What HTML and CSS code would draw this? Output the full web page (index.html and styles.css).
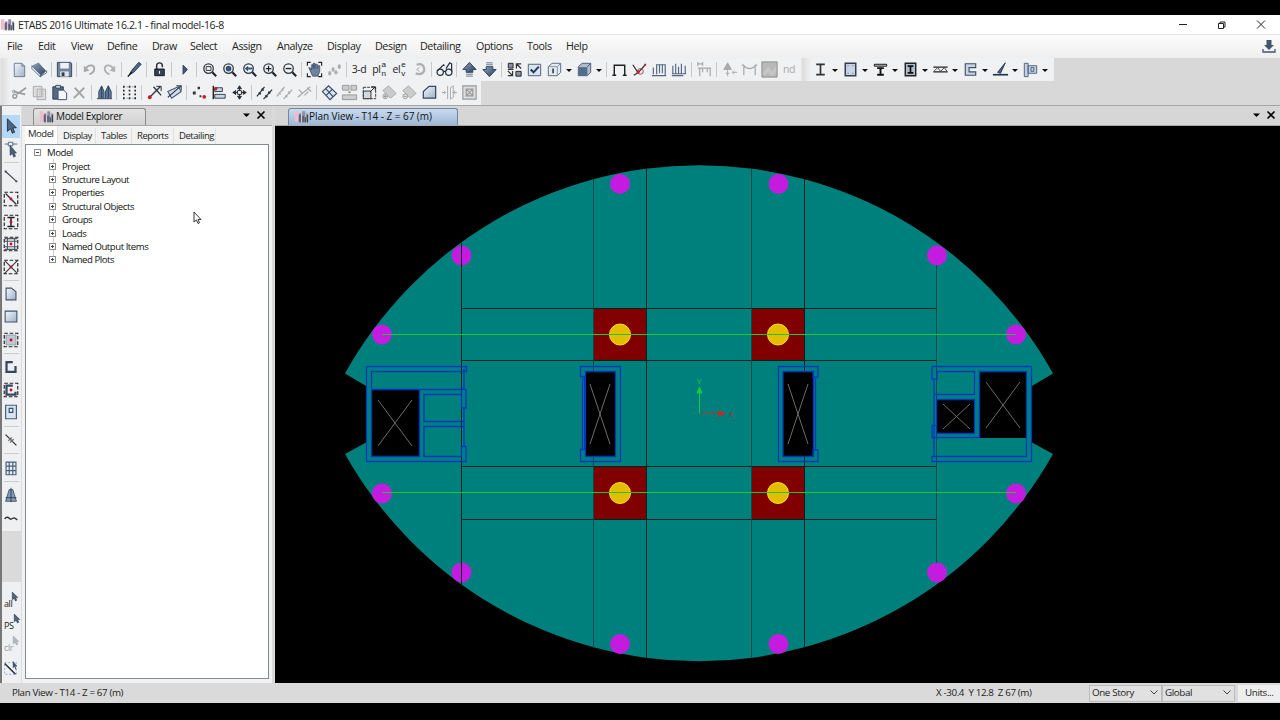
FILE: index.html
```html
<!DOCTYPE html>
<html lang="en">

<head>
    <meta charset="UTF-8">
    <meta name="viewport" content="width=device-width, initial-scale=1.0">
    <title>ETABS 2016 Ultimate 16.2.1 - final model-16-8</title>
    <link rel="stylesheet" href="styles.css">
</head>

<body>
    <!-- Icon shapes, all on a 20x20 grid -->
    <svg class="hidden">
        <defs>
            <linearGradient id="steel" x1="0" y1="0" x2="1" y2="1"><stop offset="0" stop-color="#f4f8fc"/><stop offset="1" stop-color="#9fb0c5"/></linearGradient>
            <linearGradient id="navy" x1="0" y1="0" x2="1" y2="1"><stop offset="0" stop-color="#8fa5be"/><stop offset="1" stop-color="#293b54"/></linearGradient>
        </defs>
        <symbol id="app" viewBox="0 0 20 20"><path d="M1 17V3h5v14zM8 17V6h3v11z" fill="#eebccb"/><path d="M6 17V8h3v9zM11 17V3h4v14zM16 17V6h3v11z" fill="#8b90a0"/><path d="M8 18V6M12 18V9M15 18v-7M18 18V8" stroke="#39425a" stroke-width="1.500"/></symbol>
        <symbol id="new" viewBox="0 0 20 20"><path d="M4.500 3.500h8l3 3v11h-11z" fill="url(#steel)" stroke="#6b7b91"/><path d="M12.500 3.500v3h3" fill="none" stroke="#6b7b91"/></symbol>
        <symbol id="open" viewBox="0 0 20 20"><path d="M2 6l7-3.500L17.500 12 11 17.500z" fill="url(#navy)"/><path d="M2 6v3l9 9v-2.500zM11 17.500l6.500-4V11" fill="#e4ebf3" stroke="#435873" stroke-width=".8"/></symbol>
        <symbol id="save" viewBox="0 0 20 20"><path d="M2.500 2.500h14l1 1v14h-15z" fill="#71849c" stroke="#33465e"/><path d="M5.500 3h9v6h-9z" fill="#eef2f6"/><path d="M5.500 12h9v5.500h-9z" fill="#dce3eb"/><path d="M7 13h3v4H7z" fill="#2c3c51"/></symbol>
        <symbol id="undo" viewBox="0 0 20 20"><path d="M6 9c3-5 9-4 9 0 0 3-2 5-5 6" fill="none" stroke="#a9a9a9" stroke-width="2"/><path d="M4 6l0 7 6-2z" fill="#a9a9a9"/></symbol>
        <symbol id="redo" viewBox="0 0 20 20"><path d="M14 9C11 4 5 5 5 9c0 3 2 5 5 6" fill="none" stroke="#b2b2b2" stroke-width="2"/><path d="M16 6v7l-6-2z" fill="#b2b2b2"/></symbol>
        <symbol id="pen" viewBox="0 0 20 20"><path d="M5 15L7 11l7.500-8.500 2.500 2L9 13z" fill="#526a89" stroke="#1c2839"/><path d="M3 17.500L7 13" stroke="#111" stroke-width="1.500"/></symbol>
        <symbol id="lock" viewBox="0 0 20 20"><path d="M7 10V6c0-4 6-4 6 0v1.500" fill="none" stroke="#222c38" stroke-width="1.500"/><path d="M5 9.500h10v7H5z" fill="#344457" stroke="#111"/><path d="M10 11.500v3" stroke="#fff"/></symbol>
        <symbol id="run" viewBox="0 0 20 20"><path d="M8.500 5.500l4.500 4.500-4.500 5z" fill="#41597a" stroke="#2a3b53"/></symbol>
        <symbol id="zoom" viewBox="0 0 20 20"><circle cx="9" cy="9" r="5" fill="#eef3f8" stroke="#353c46" stroke-width="1.400"/><path d="M13 13l4 4" stroke="#20262f" stroke-width="2.300"/></symbol>
        <symbol id="zbox" viewBox="0 0 20 20"><use href="#zoom"/><path d="M6.500 7h5v4h-5z" fill="none" stroke="#333"/></symbol>
        <symbol id="zfull" viewBox="0 0 20 20"><use href="#zoom"/><circle cx="9" cy="9" r="3" fill="#385475"/></symbol>
        <symbol id="zprev" viewBox="0 0 20 20"><use href="#zoom"/><path d="M5 9l3.500-3v2H13v2H8.500v2z" fill="#35567e"/></symbol>
        <symbol id="zin" viewBox="0 0 20 20"><use href="#zoom"/><path d="M6 9h6M9 6v6" stroke="#222" stroke-width="1.300"/></symbol>
        <symbol id="zout" viewBox="0 0 20 20"><use href="#zoom"/><path d="M6 9h6" stroke="#222" stroke-width="1.500"/></symbol>
        <symbol id="pan" viewBox="0 0 20 20"><path d="M2.500 6V2.500H6M14 2.500h3.500V6M2.500 14v3.500H6M17.500 14v3.500H14" fill="none" stroke="#222" stroke-width="1.200"/><path d="M4 8l2 .5 1 2V5h1.700v4V3.500h1.800V9l.5-4.500H13V9l1-3h1.500v6l-2 5H8z" fill="#71849b" stroke="#364c68" stroke-width=".8"/></symbol>
        <symbol id="feet" viewBox="0 0 20 20"><g fill="#aeaeae"><ellipse cx="5" cy="14" rx="1.700" ry="2.500"/><ellipse cx="8.500" cy="10" rx="1.700" ry="2.300"/><ellipse cx="11.500" cy="13" rx="1.700" ry="2.300"/><ellipse cx="15" cy="7" rx="1.700" ry="2.500"/></g></symbol>
        <symbol id="rotate" viewBox="0 0 20 20"><path d="M7 5c5-2 8 1 8 5s-5 6-9 4" fill="none" stroke="#b0b0b0" stroke-width="2.500"/><path d="M10 8l-3 2 3 2" fill="none" stroke="#aaa"/></symbol>
        <symbol id="glasses" viewBox="0 0 20 20"><g fill="#eef3f8" stroke="#26303d" stroke-width="1.300"><circle cx="5.500" cy="13" r="3.300"/><circle cx="14.500" cy="13" r="3.300"/><path d="M9 12h2M3 11l6-6 1 1M17.500 12V4l-2-1-4 6" fill="none"/></g></symbol>
        <symbol id="up" viewBox="0 0 20 20"><path d="M10 2.500L17 10h-3.500v3h-7v-3H3z" fill="url(#navy)" stroke="#2e445f"/><path d="M6.500 15h7M6.500 17h7" stroke="#61758d"/></symbol>
        <symbol id="down" viewBox="0 0 20 20"><path d="M10 17.500L17 10h-3.500V7h-7v3H3z" fill="url(#navy)" stroke="#2e445f"/><path d="M6.500 5h7M6.500 3h7" stroke="#61758d"/></symbol>
        <symbol id="shrink" viewBox="0 0 20 20"><path d="M3.500 3.500h5v5h-5zM11.500 12h5.500v5h-5.500z" fill="#8592a3" stroke="#222"/><path d="M17 4h-5v5M12 4l5 5M3 11.500l5 5M8 11.500v5H3M3 10h6" fill="none" stroke="#333" stroke-width="1.300"/></symbol>
        <symbol id="check" viewBox="0 0 20 20"><path d="M3.500 4.500h13v12h-13z" fill="#dbe5ef" stroke="#4d6078"/><path d="M6 10l3 3 5.500-6" fill="none" stroke="#263c5a" stroke-width="2.200"/></symbol>
        <symbol id="cube" viewBox="0 0 20 20"><path d="M3.500 7l4-3.500h9V13L13 16.500H3.500z" fill="#e4eaf0" stroke="#596b81"/><path d="M3.500 7H13v9.500M13 7l3.500-3.500" fill="none" stroke="#8090a5"/><path d="M8.500 9v5" stroke="#222" stroke-width="1.500"/></symbol>
        <symbol id="solid" viewBox="0 0 20 20"><path d="M3.500 7l4-3.500h9V13L13 16.500H3.500z" fill="#aebccd" stroke="#4b5f79"/><path d="M4 7.500h9v9H4z" fill="#536d8c"/><path d="M13 7l3.500-3.500" stroke="#43556b"/></symbol>
        <symbol id="frame" viewBox="0 0 20 20"><path d="M4.500 16V5.500h11V16M2.500 16h4M13.500 16h4" fill="none" stroke="#222" stroke-width="1.500"/></symbol>
        <symbol id="joint" viewBox="0 0 20 20"><path d="M3 5l6 9M4 16l5-3 7-8" fill="none" stroke="#333" stroke-width="1.300"/><circle cx="11" cy="12" r="3" fill="none" stroke="#a93b4a"/><path d="M15 4h2v2h-2zM7 11h3v3H7z" fill="#c32136"/></symbol>
        <symbol id="load" viewBox="0 0 20 20"><path d="M3.500 15V8M7 15V5h9v11M10 5v9M13 5v9M2 16.500h15" fill="none" stroke="#52667f" stroke-width="1.200"/></symbol>
        <symbol id="load2" viewBox="0 0 20 20"><path d="M3 15V6M6 15V4M9 14V7M12 14V4M16 14V6M2 14.500h15M2 16.500h12" fill="none" stroke="#52667f" stroke-width="1.200"/></symbol>
        <symbol id="beam" viewBox="0 0 20 20"><path d="M3 2v4M8 2v4M3 4h5M5 17V8.500h11V17M3 8.500h14M8 8.500V13M13 8.500V13" fill="none" stroke="#aaa" stroke-width="1.300"/></symbol>
        <symbol id="tree" viewBox="0 0 20 20"><path d="M8 3l-4 7h8zM8 10v7M6 14h4M18 13h-5M13 13l2-2M13 13l2 2" fill="#aaa" stroke="#aaa"/></symbol>
        <symbol id="bend" viewBox="0 0 20 20"><path d="M4 16V6c3 4 9 4 12 0v10M2 5l4 3M18 5l-4 3" fill="none" stroke="#aaa" stroke-width="1.300"/></symbol>
        <symbol id="map" viewBox="0 0 20 20"><path d="M2 2h16v16H2z" fill="#b9b9b9" stroke="#8c8c8c"/><path d="M3 13l6-6 4 5 4-6v6l-4 5-4-4-4 3z" fill="#c6c6c6"/></symbol>
        <symbol id="isec" viewBox="0 0 20 20"><path d="M5.500 4.500h9M5.500 15.500h9M10 4v12" stroke="#333" stroke-width="1.800"/></symbol>
        <symbol id="col" viewBox="0 0 20 20"><path d="M4.500 3.500h11v13h-11z" fill="#c8d4e1" stroke="#333f4f" stroke-width="1.600"/><path d="M7 6h1M12 6h1M7 14h1M12 14h1" stroke="#506780"/></symbol>
        <symbol id="tsec" viewBox="0 0 20 20"><path d="M3.500 4.500h13v2h-13z" fill="#ccc" stroke="#111"/><path d="M6.500 8.500h7M6.500 15.500h7M10 8v8" stroke="#111" stroke-width="2"/></symbol>
        <symbol id="ibox" viewBox="0 0 20 20"><path d="M4.500 3.500h11v13h-11z" fill="#aebccb" stroke="#222" stroke-width="1.500"/><path d="M7 6.500h6M7 13.500h6M10 7v6" stroke="#111" stroke-width="1.800"/></symbol>
        <symbol id="truss" viewBox="0 0 20 20"><path d="M2.500 7.500h15M2.500 12.500h15" stroke="#222" stroke-width="1.500"/><path d="M3 12l4-4 3 4 4-4 3 4" fill="none" stroke="#444"/></symbol>
        <symbol id="wall" viewBox="0 0 20 20"><path d="M4.500 4h11v4H8.500v4.500h7v3.500h-11z" fill="#c7d4e1" stroke="#405069" stroke-width="1.200"/></symbol>
        <symbol id="edit" viewBox="0 0 20 20"><path d="M7 13l8-10-5 11z" fill="#506683" stroke="#22354d"/><path d="M2 15.500h16" stroke="#25394f" stroke-width="1.800"/></symbol>
        <symbol id="conn" viewBox="0 0 20 20"><path d="M3.500 3.500h4v14h-4zM7.500 6h9v8h-9z" fill="#c2d0df" stroke="#4d6482"/><path d="M10.500 8h3v4h-3z" fill="none" stroke="#4d6482"/></symbol>
        <symbol id="cut" viewBox="0 0 20 20"><path d="M17 5L7 12M4 9l12 3" stroke="#999" stroke-width="1.700"/><circle cx="5" cy="14" r="2" fill="none" stroke="#999" stroke-width="1.500"/><circle cx="4" cy="9" r="1.500" fill="none" stroke="#999"/></symbol>
        <symbol id="copy" viewBox="0 0 20 20"><path d="M3.500 3.500h9v11h-9zM7.500 6.500h9v11h-9z" fill="#dedede" stroke="#aaa"/><path d="M9.500 9h5M9.500 11.500h5M9.500 14h5" stroke="#bbb"/></symbol>
        <symbol id="paste" viewBox="0 0 20 20"><path d="M3 4h11v13H3z" fill="#536a87" stroke="#273a51"/><path d="M6 2.500h5v3H6z" fill="#ccd5de" stroke="#3a485a"/><path d="M8.500 7.500h6l3 3v7h-9z" fill="#f3f6fa" stroke="#3f5067"/></symbol>
        <symbol id="del" viewBox="0 0 20 20"><path d="M5 5l10 11M15 5L4 16" stroke="#a5a5a5" stroke-width="2"/></symbol>
        <symbol id="towers" viewBox="0 0 20 20"><path d="M4 16V9l3-6 2.500 6v7M11 16V9l3-6 3 6v7" fill="#5f7b99" stroke="#2c435e"/><path d="M2 16.500h16M7 4v12M14 3v13" stroke="#263c54"/></symbol>
        <symbol id="grid" viewBox="0 0 20 20"><path d="M4 3v14M10 3v14M16 3v14" stroke="#222" stroke-width="1.700" stroke-dasharray="2 2"/><path d="M4 4h12M4 16h12" stroke="#666" stroke-dasharray="1 2"/></symbol>
        <symbol id="mpoint" viewBox="0 0 20 20"><path d="M6 14L16 4M9 4l8 9" stroke="#2a3440" stroke-width="1.400"/><path d="M12 3.500h5v5" fill="none" stroke="#222"/><circle cx="5" cy="15" r="2" fill="#c4172c"/></symbol>
        <symbol id="mline" viewBox="0 0 20 20"><path d="M3 9l11-5 3 5-10 7z" fill="#d7e0e9" stroke="#455c76" stroke-width="1.200"/><path d="M3 15L17 3M12 3h5v5" fill="none" stroke="#253950" stroke-width="1.100"/></symbol>
        <symbol id="points" viewBox="0 0 20 20"><path d="M8 4h2.500v2.500H8zM3 9h3v3H3zM10 13h2v2h-2z" fill="#333"/><circle cx="15" cy="14.500" r="2" fill="#c61e31"/></symbol>
        <symbol id="align" viewBox="0 0 20 20"><path d="M3.500 3v14" stroke="#222" stroke-width="1.500"/><path d="M5 5h8v4H5zM5 12h11v4H5z" fill="#ccd7e3" stroke="#303c4b"/><circle cx="6" cy="6" r="1.800" fill="#c61e31"/></symbol>
        <symbol id="move" viewBox="0 0 20 20"><path d="M3 10h14M10 3v14M3 10l3-2v4zM17 10l-3-2v4zM10 3L8 6h4zM10 17l-2-3h4z" fill="#222d3b" stroke="#222d3b"/><path d="M8 8h4v4H8z" fill="#fff" stroke="#222"/></symbol>
        <symbol id="lines" viewBox="0 0 20 20"><path d="M2 14l8-10M9 17l9-10" stroke="#29333e" stroke-width="1.300"/><path d="M4 10l2 2M7 6l2 2M11 13l2 2M14 9l2 2" stroke="#29333e" stroke-width="1.800"/></symbol>
        <symbol id="linesg" viewBox="0 0 20 20"><path d="M2 14l8-10M9 17l9-10M4 10l2 2M7 6l2 2M11 13l2 2M14 9l2 2" stroke="#aaa" stroke-width="1.300"/></symbol>
        <symbol id="breakg" viewBox="0 0 20 20"><path d="M3 15L16 4M4 7l4 4M10 13l4-4M13 5l4 4" stroke="#aaa" stroke-width="1.300"/></symbol>
        <symbol id="mesh" viewBox="0 0 20 20"><path d="M2.500 9L9 3l8.500 8-7 6.500zM6 6l8 8.500M13 6.500l-7 7" fill="#dae4ed" stroke="#334a65" stroke-width="1.200"/></symbol>
        <symbol id="merge" viewBox="0 0 20 20"><path d="M2.500 2.500h7v5h-7zM11.500 2.500h6v5h-6zM2.500 12.500h15v5h-15z" fill="#ccc" stroke="#999"/><path d="M8 9h4l-2 2z" fill="#888"/></symbol>
        <symbol id="expand" viewBox="0 0 20 20"><path d="M3.500 4.500h13v12h-13z" fill="none" stroke="#333" stroke-dasharray="3 1"/><path d="M3.500 8.500h8v8h-8z" fill="#d0dae5" stroke="#333"/><path d="M11 9l5-5M12 4h4v4" stroke="#222" fill="none"/></symbol>
        <symbol id="sladd" viewBox="0 0 20 20"><path d="M3 8l6-5 8 8-6 5-3-3z" fill="#ccc" stroke="#aaa"/><circle cx="5.500" cy="14" r="2.500" fill="#eee" stroke="#999"/><path d="M4 14h3M5.500 12.500v3" stroke="#888"/></symbol>
        <symbol id="slsub" viewBox="0 0 20 20"><path d="M3 8l6-5 8 8-6 5-3-3z" fill="#ccc" stroke="#aaa"/><circle cx="5.500" cy="14" r="2.500" fill="#eee" stroke="#999"/><path d="M4 14h3" stroke="#888"/></symbol>
        <symbol id="poly" viewBox="0 0 20 20"><path d="M3.500 16V9l6-5.500h7V16z" fill="url(#steel)" stroke="#35475e" stroke-width="1.300"/></symbol>
        <symbol id="split" viewBox="0 0 20 20"><path d="M8 3v14M11 5l3-2v12l-3 2zM2 10h4M14 10h4M4 8l2 2-2 2M16 8l-2 2 2 2" fill="none" stroke="#aaa"/></symbol>
        <symbol id="opening" viewBox="0 0 20 20"><path d="M3 3h14v14H3zM6.500 6.500h7v7h-7zM6.500 6.500l7 7M13.500 6.500l-7 7" fill="#ddd" stroke="#999" stroke-width="1.200"/></symbol>
        <symbol id="pointer" viewBox="0 0 20 20"><path d="M6 2v14l3.500-3 2 5 2.500-1-2-5h4z" fill="#50657e" stroke="#203047"/></symbol>
        <symbol id="reshape" viewBox="0 0 20 20"><path d="M3 4.500h14" stroke="#46627f"/><path d="M7 2.500h5v4H7z" fill="#eaf2fa" stroke="#46627f"/><path d="M9 6v11l2.500-2 1.500 4 2-1-1.500-3.500H16z" fill="#4a6079" stroke="#27394f" stroke-width=".7"/></symbol>
        <symbol id="line" viewBox="0 0 20 20"><path d="M4 5l12 11" stroke="#3c4652" stroke-width="1.200"/><path d="M3 4h2v2H3zM15 15h2v2h-2z" fill="#3c4652"/></symbol>
        <symbol id="sel" viewBox="0 0 20 20"><path d="M2.500 2.500h15v15h-15z" fill="none" stroke="#222" stroke-width="1.300" stroke-dasharray="4 2"/></symbol>
        <symbol id="dot" viewBox="0 0 20 20"><circle cx="10" cy="10" r="1.600" fill="#c00f2c"/></symbol>
        <symbol id="qline" viewBox="0 0 20 20"><use href="#sel"/><path d="M4 4l12 12" stroke="#333" stroke-width="1.500"/><use href="#dot"/></symbol>
        <symbol id="qcol" viewBox="0 0 20 20"><use href="#sel"/><path d="M6 5h8M6 15h8M10 5v10" stroke="#222" stroke-width="1.600"/><use href="#dot"/></symbol>
        <symbol id="qsec" viewBox="0 0 20 20"><use href="#sel"/><path d="M3 4h14M3 7h14M3 13h14M3 16h14M6 3v14M14 3v14" stroke="#4c5763" stroke-width="1.200"/><use href="#dot"/></symbol>
        <symbol id="qbrace" viewBox="0 0 20 20"><use href="#sel"/><path d="M3 3l14 14M17 3L3 17" stroke="#333" stroke-width="1.200"/><use href="#dot"/></symbol>
        <symbol id="area" viewBox="0 0 20 20"><path d="M4.500 3.500h6l5 4v9h-11z" fill="url(#steel)" stroke="#41536b" stroke-width="1.200"/></symbol>
        <symbol id="rect" viewBox="0 0 20 20"><path d="M3.500 3.500h13v12h-13z" fill="url(#steel)" stroke="#41536b" stroke-width="1.200"/></symbol>
        <symbol id="qarea" viewBox="0 0 20 20"><path d="M4.500 4.500h11v11h-11z" fill="#c1c8d2" stroke="#8d98a5"/><use href="#sel"/><use href="#dot"/></symbol>
        <symbol id="dwall" viewBox="0 0 20 20"><path d="M12 4.500H5v11h10V9" fill="none" stroke="#35485f" stroke-width="2.500"/></symbol>
        <symbol id="qwall" viewBox="0 0 20 20"><use href="#sel"/><path d="M12 5H5v10h10v-3" fill="none" stroke="#35485f" stroke-width="2.500"/><use href="#dot"/></symbol>
        <symbol id="wopen" viewBox="0 0 20 20"><path d="M4 2.500h12v15H4z" fill="#dae4ed" stroke="#465f7c" stroke-width="1.300"/><path d="M8 6h4v4.500H8z" fill="#fff" stroke="#304b6a" stroke-width="1.300"/></symbol>
        <symbol id="link" viewBox="0 0 20 20"><path d="M4 4l12 12" stroke="#333" stroke-width="1.400"/><path d="M7 11l4-4M9 13l4-4M8 8l4 4" stroke="#666" stroke-width="1.300"/></symbol>
        <symbol id="sgrid" viewBox="0 0 20 20"><path d="M4.500 3.500h11v14h-11zM8 3.500v14M12 3.500v14M4.500 8h11M4.500 13h11" fill="#e7edf3" stroke="#49607b" stroke-width="1.300"/></symbol>
        <symbol id="tower" viewBox="0 0 20 20"><path d="M4 17L8 4h4l4 13z" fill="#869bb3" stroke="#42586f"/><path d="M10 2v16M4 13h12" stroke="#263c54"/></symbol>
        <symbol id="wave" viewBox="0 0 20 20"><path d="M3 11c2-3 4-2 6 0 2 1.500 3-2 5-1l3 2" fill="none" stroke="#333" stroke-width="1.600"/></symbol>
        <symbol id="qclear" viewBox="0 0 20 20"><path d="M3 4h13v13H3z" fill="none" stroke="#89a5c1" stroke-dasharray="2 2"/><path d="M3 5l12 12" stroke="#1f2b39" stroke-width="1.600"/><path d="M12 2v8l2-1 1 3 1-1-1-3h2z" fill="#415872"/></symbol>
    </svg>

    <div class="window">
        <div class="titlebar">
            <svg class="app-icon"><use href="#app"/></svg>
            <span class="title">ETABS 2016 Ultimate 16.2.1 - final model-16-8</span>
            <svg class="controls" viewBox="0 0 100 20"><g fill="none" stroke="#222"><path d="M9 9.500h8"/><path d="M48.500 8.500h5v5h-5zM50 8.500V7h5v5h-1.500"/><path d="M87 5.500l8 8M95 5.500l-8 8"/></g></svg>
        </div>

        <div class="menubar">
            <span style="width: 31px">File</span><span style="width: 33px">Edit</span><span style="width: 36px">View</span><span style="width: 45px">Define</span><span style="width: 38px">Draw</span><span style="width: 42px">Select</span><span style="width: 45px">Assign</span><span style="width: 50px">Analyze</span><span style="width: 48px">Display</span><span style="width: 45px">Design</span><span style="width: 56px">Detailing</span><span style="width: 51px">Options</span><span style="width: 39px">Tools</span><span>Help</span>
            <svg class="download" viewBox="0 0 16 16"><path d="M5.500 2h5v5H13l-5 5-5-5h2.500z" fill="#42566b"/><path d="M2 11v3h12v-3" fill="none" stroke="#42566b" stroke-width="1.300"/></svg>
        </div>

        <div class="toolrow">
            <div class="toolbar" id="bar-main"></div>
            <div class="toolbar sections" id="bar-sections"></div>
        </div>
        <div class="toolrow">
            <div class="toolbar" id="bar-edit"></div>
        </div>

        <div class="workspace">
            <div class="sidebar">
                <div id="bar-draw"></div>
                <div class="filler"></div>
                <div class="snap">
                    <div><span>all</span><svg><use href="#pointer"/></svg></div>
                    <div><span>PS</span><svg><use href="#pointer"/></svg></div>
                    <div class="off"><span>clr</span><svg><use href="#pointer"/></svg></div>
                </div>
                <div class="tool"><svg class="icon"><use href="#qclear"/></svg></div>
            </div>

            <div class="explorer">
                <div class="panel-head">
                    <div class="tab"><svg class="app-icon"><use href="#app"/></svg>Model Explorer</div>
                    <svg class="panel-btns" viewBox="0 0 26 12"><path d="M1 4.500h7L4.500 8z"/><path d="M15.500 2.500l7 7M22.500 2.500l-7 7" stroke="#000" stroke-width="1.600"/></svg>
                </div>
                <div class="subtabs">
                    <span class="active" style="width: 28px">Model</span><span style="width: 32px">Display</span><span style="width: 30px">Tables</span><span style="width: 36px">Reports</span><span style="width: 36px">Detailing</span>
                </div>
                <div class="tree">
                    <div class="node root"><i class="box minus"></i>Model</div>
                    <div class="children">
                        <div class="node"><i class="box"></i>Project</div>
                        <div class="node"><i class="box"></i>Structure Layout</div>
                        <div class="node"><i class="box"></i>Properties</div>
                        <div class="node"><i class="box"></i>Structural Objects</div>
                        <div class="node"><i class="box"></i>Groups</div>
                        <div class="node"><i class="box"></i>Loads</div>
                        <div class="node"><i class="box"></i>Named Output Items</div>
                        <div class="node"><i class="box"></i>Named Plots</div>
                    </div>
                    <svg class="cursor" viewBox="0 0 10 14"><path d="M1 1v10l2.500-2 1.500 3.500 1.500-.7L5 8.500h3z" fill="#fff" stroke="#222" stroke-width=".9"/></svg>
                </div>
            </div>

            <div class="view">
                <div class="panel-head">
                    <div class="tab blue"><svg class="app-icon"><use href="#app"/></svg>Plan View - T14 - Z = 67 (m)</div>
                    <svg class="panel-btns" viewBox="0 0 26 12"><path d="M1 4.500h7L4.500 8z"/><path d="M15.500 2.500l7 7M22.500 2.500l-7 7" stroke="#000" stroke-width="1.600"/></svg>
                </div>
                <svg class="plan" viewBox="275 126 1005 557">
                    <!-- slab -->
                    <path fill="#00807d" d="M345 373.500A405 405 0 0 1 1053 373.500L1032 386V442.500L1053 454A406 406 0 0 1 345 454L366 442.500V386z"/>
                    <!-- column drops -->
                    <path fill="#800000" d="M593 308h54v53h-54zM752 308h53v53h-53zM593 466h54v54h-54zM752 466h53v54h-53z"/>
                    <g fill="#c41be0"><circle cx="620" cy="184" r="10"/><circle cx="778.500" cy="184" r="10"/><circle cx="461.500" cy="255.500" r="10"/><circle cx="937" cy="255.500" r="10"/><circle cx="382" cy="334.500" r="10"/><circle cx="1016" cy="334.500" r="10"/><circle cx="382" cy="493.500" r="10"/><circle cx="1016" cy="493.500" r="10"/><circle cx="461.500" cy="572.500" r="10"/><circle cx="937" cy="572.500" r="10"/><circle cx="620" cy="644" r="10"/><circle cx="778.500" cy="644" r="10"/></g>
                    <g fill="#e3bd00" stroke="#ffe11b"><circle cx="620" cy="334.500" r="10.500"/><circle cx="778" cy="334.500" r="10.500"/><circle cx="620" cy="493" r="10.500"/><circle cx="778" cy="493" r="10.500"/></g>
                    <!-- slab edges -->
                    <path fill="none" stroke="#06221f" d="M461.500 243v342M646.500 169v489M804.500 179v469M461 308.500h476M461 360.500h476M461 466.500h476M461 519.500h476"/>
                    <path fill="none" stroke="#0a4c49" d="M593.500 179v469M751.500 169v489M936.500 265v298"/>
                    <path stroke="#1dc82a" stroke-width="1.200" d="M382 334.500h634M382 492.500h634"/>
                    <!-- shaft openings -->
                    <path d="M371 390h49v66h-49zM585 371h31v86h-31zM783 371h31v86h-31zM936 399h39v35h-39zM979 371h48v67h-48z"/>
                    <!-- core walls -->
                    <g fill="none" stroke="#0038c4" stroke-width="1.300">
                        <path d="M366.500 366.500h100v5H371.500V456.500h48V389.500M366.500 366.500v95h99.500v-15h-4.500v10h-37.500V426.500h39.500M371.500 389.500h94.500v18.500h-5M464 369v20M464 408v38M461.500 390v18.500M461.500 394.500h-37.500v27h39.500"/>
                        <path d="M580.500 366.500h40v95h-40v-12h4v-73h-4zM585.500 371.500h30v85h-30zM582.500 377v73"/>
                        <path d="M778.500 366.500h39.500V377h-5V371.500h-30v85h30v-6.500h5v11.500h-39.500zM815.500 377v73M813.500 371.500v85"/>
                        <path d="M932 366.500h99.500v95h-99.500v-5h94.500v-85h-47v66h-47.500v-12h4.500M932 366.500v12.500h5v-7.500h37.500v23H935M934 379v78M936.500 399.500h38v34h-38z"/>
                    </g>
                    <path fill="none" stroke="#777" stroke-width=".9" d="M378 400l34 46M412 400l-34 46M590 384l20 60M610 384l-20 60M788 384l20 60M808 384l-20 60M943 404l27 25M970 404l-27 25M986 382l34 46M1020 382l-34 46"/>
                    <!-- axes -->
                    <path d="M699.500 413.500V392M697 393l2.500-6 2.500 6z" fill="#19c83a" stroke="#19c83a"/>
                    <path d="M701 413.500h19M719 411l6 2.500-6 2.500z" fill="#b8302a" stroke="#b8302a" stroke-width="1.200"/>
                    <text x="696.500" y="384" class="axis y">Y</text>
                    <text x="728.500" y="416.500" class="axis x">X</text>
                </svg>
            </div>
        </div>

        <div class="statusbar">
            <span class="where">Plan View - T14 - Z = 67 (m)</span>
            <span class="coords">X -30.4&nbsp; Y 12.8&nbsp; Z 67 (m)</span>
            <span class="combo">One Story<svg viewBox="0 0 8 5"><path d="M.5.5L4 4 7.500.5" fill="none" stroke="#444"/></svg></span>
            <span class="combo">Global<svg viewBox="0 0 8 5"><path d="M.5.5L4 4 7.500.5" fill="none" stroke="#444"/></svg></span>
            <span class="units">Units...</span>
        </div>
    </div>

    <script src="script.js"></script>
</body>

</html>
```
FILE: styles.css
```css
body {
    margin: 0;
    background: #000;
    font-family: "Open Sans", "Noto Sans", sans-serif;
    color: #222;
}

.hidden {
    position: absolute;
    width: 0;
    height: 0;
}

.window {
    display: flex;
    flex-direction: column;
    width: 1280px;
    height: 688px;
    margin-top: 15px;
    background: #d8d8d8;
    overflow: hidden;
}

svg {
    display: block;
    flex: none;
}

.titlebar {
    display: flex;
    align-items: center;
    height: 19px;
    background: #fff;
    font-size: 10.500px;
    letter-spacing: -0.38px;
}

.app-icon {
    width: 15px;
    height: 15px;
}

.title {
    margin-left: 3px;
    white-space: nowrap;
}

.controls {
    width: 100px;
    height: 20px;
    margin-left: auto;
    margin-right: 10px;
}

/* Menu */
.menubar {
    display: flex;
    align-items: center;
    height: 24px;
    box-sizing: border-box;
    padding-left: 7px;
    padding-bottom: 2px;
    border-top: 1px solid #e4e4e4;
    background: linear-gradient(#fbfbfb, #efeff0);
    font-size: 10.700px;
}

.menubar span {
    letter-spacing: -0.38px;
    white-space: nowrap;
}

.download {
    width: 16px;
    height: 16px;
    margin-left: auto;
    margin-right: 3px;
}

/* Toolbars */
.toolrow {
    display: flex;
    height: 23px;
}

.toolrow + .toolrow {
    height: 24px;
}

.toolbar {
    display: flex;
    align-items: center;
    padding-left: 8px;
    padding-right: 2px;
    padding-bottom: 1px;
    background: linear-gradient(90deg, #dcdcdc, #f0f1f2 9px);
    border-left: 1px solid #e6e6e6;
}

.toolbar.sections {
    padding-right: 4px;
}

.tool {
    display: flex;
    justify-content: center;
    align-items: center;
    width: 20px;
    height: 20px;
}

.icon {
    width: 19px;
    height: 19px;
}

.label {
    font-size: 10.500px;
    letter-spacing: -0.4px;
    white-space: nowrap;
}

.label.off {
    color: #aaa;
}

.stack {
    display: flex;
    flex-direction: column;
    margin-left: 1px;
    font: 8px/9px "Liberation Sans", sans-serif;
}

.stack i {
    display: block;
    height: 9.500px;
    font-style: normal;
}

.sep {
    width: 5px;
    height: 15px;
    background: linear-gradient(#c9c9c9, #c9c9c9) center / 1px 100% no-repeat;
}

.arrow {
    width: 0;
    margin: 2px 2px 0 2px;
    border: 3px solid transparent;
    border-top: 3px solid #111;
    border-bottom: 0;
}

/* Workspace */
.workspace {
    display: flex;
    flex: 1;
    min-height: 0;
    border-top: 1px solid #a5a5a5;
}

.sidebar {
    width: 19px;
    padding-top: 9px;
    border-left: 2px solid #777;
    border-right: 1px solid #ddd;
    background: #eff0f1;
}

.sidebar .tool {
    width: 18px;
    height: 22.600px;
}

.sidebar .icon {
    width: 18px;
    height: 18px;
}

.sidebar .tool.selected {
    background: #b5d9f4;
}

.sidebar .sep {
    width: 15px;
    height: 5px;
    margin-left: 2px;
    background: linear-gradient(#ccc, #ccc) center / 100% 1px no-repeat;
}

.filler {
    height: 51px;
    margin-top: 2px;
    margin-bottom: 9px;
    background: #d9dad9;
}

.snap {
    font-size: 9px;
    letter-spacing: -0.4px;
}

.snap div {
    display: flex;
    height: 22px;
    padding-left: 2px;
}

.snap span {
    padding-top: 6px;
    line-height: 13px;
}

.snap svg {
    width: 11px;
    height: 11px;
    margin-left: -3px;
}

.snap .off {
    opacity: 0.4;
}

.explorer {
    display: flex;
    flex-direction: column;
    width: 250px;
    border-right: 3px solid #d9d9d9;
    background: #f2f2f2;
}

.panel-head {
    display: flex;
    align-items: flex-end;
    height: 20px;
    box-sizing: border-box;
    background: #d6d6d6;
    border-bottom: 1px solid #aaa;
}

.tab {
    display: flex;
    align-items: center;
    width: 111px;
    height: 14px;
    padding-bottom: 2px;
    margin-left: 11px;
    border: 1px solid #8c8c8c;
    border-bottom: 0;
    border-radius: 3px 3px 0 0;
    background: linear-gradient(#e2e2e2, #d2d2d2);
    font-size: 10px;
    letter-spacing: -0.35px;
    color: #111;
    white-space: nowrap;
}

.tab .app-icon {
    margin: 0 2px 0 5px;
}

.tab.blue {
    width: 168px;
    margin-left: 13px;
    border-color: #6f87a7;
    background: linear-gradient(#c9daee, #9eb8d6);
    letter-spacing: -0.05px;
}

.tab.blue .app-icon {
    margin-right: 0;
}

.panel-btns {
    width: 26px;
    height: 12px;
    margin: 0 4px 4px auto;
}

.view .panel-btns {
    margin-right: 2px;
}

.subtabs {
    display: flex;
    height: 18px;
    padding-left: 3px;
    align-items: flex-end;
    font-size: 9.500px;
}

.subtabs span {
    padding: 0 0 1px 5px;
    height: 15px;
    line-height: 15px;
    border-right: 1px solid #e1e1e1;
    letter-spacing: -0.45px;
}

.subtabs .active {
    padding: 0 1px 3px 3px;
    background: #fff;
}

.tree {
    position: relative;
    flex: 1;
    margin: 0 3px 4px 3px;
    padding-top: 1px;
    border: 1px solid #858b94;
    background: #fff;
    font-size: 9.600px;
    letter-spacing: -0.46px;
    color: #111;
}

.node {
    display: flex;
    align-items: center;
    height: 13.400px;
    white-space: nowrap;
}

.root {
    padding-left: 8px;
}

.children {
    padding-left: 23px;
    background: linear-gradient(#ccc, #ccc) 27px 0 / 1px 102px no-repeat;
}

.box {
    width: 5px;
    height: 5px;
    margin-right: 6px;
    border: 1px solid #8e8e8e;
    background: linear-gradient(#444, #444) center / 3px 1px no-repeat, linear-gradient(#444, #444) center / 1px 3px no-repeat, #fff;
}

.box.minus {
    background: linear-gradient(#444, #444) center / 3px 1px no-repeat, #fff;
}

.cursor {
    position: absolute;
    left: 167px;
    top: 66px;
    width: 10px;
    height: 14px;
}

.view {
    display: flex;
    flex-direction: column;
    width: 1005px;
}

.plan {
    width: 1005px;
    height: 557px;
    background: #000;
}

.axis {
    font: 8px "Liberation Sans", sans-serif;
}

.axis.y {
    fill: #19c83a;
}

.axis.x {
    fill: #a53427;
}

/* Status bar */
.statusbar {
    display: flex;
    align-items: center;
    height: 20px;
    background: #dadada;
    font-size: 9.800px;
    letter-spacing: -0.38px;
    white-space: nowrap;
}

.statusbar span {
    flex: none;
    box-sizing: border-box;
    padding-bottom: 2px;
}

.where {
    width: 936px;
    padding-left: 12px;
}

.coords {
    width: 153px;
}

.statusbar .combo {
    display: flex;
    align-items: center;
    justify-content: space-between;
    width: 73px;
    height: 17px;
    padding: 0 3px 1px 2px;
    border: 1px solid #bbb;
    background: #e1e1e1;
}

.combo svg {
    width: 8px;
    height: 5px;
}

.units {
    height: 17px;
    width: 42px;
    margin-left: 3px;
    padding-left: 7px;
    line-height: 16px;
    background: #eee;
}
```
FILE: script.js
```javascript
// "|" is a separator, "v" a dropdown arrow
const bars = {
    'bar-main': 'new open | save | undo redo | pen | lock | run | zbox zfull zprev zin zout | pan feet | t:3-d t:pl,a,n t:el,e,v rotate | glasses | up down | shrink check cube v solid v | frame joint load load2 | beam | tree bend map g:nd',
    'bar-sections': 'isec v col v tsec v ibox v truss v wall v edit v conn v',
    'bar-edit': 'cut copy paste del | towers | grid | mpoint mline | points align move | lines linesg breakg | mesh merge expand sladd slsub poly split opening',
    'bar-draw': 'pointer reshape | line qline qcol qsec qbrace | area rect qarea | dwall qwall wopen | link | sgrid | tower wave'
};

function toolHtml(name) {
    if (name === '|') return '<div class="sep"></div>';
    if (name === 'v') return '<div class="arrow"></div>';
    if (name[1] === ':') {
        const parts = name.slice(2).split(',');
        const stack = parts.length > 1 ? `<span class="stack"><i>${parts[1]}</i><i>${parts[2]}</i></span>` : '';
        return `<div class="tool label ${name[0] === 'g' ? 'off' : ''}">${parts[0]}${stack}</div>`;
    }
    return `<div class="tool ${name === 'pointer' ? 'selected' : ''}"><svg class="icon"><use href="#${name}"/></svg></div>`;
}

for (const id in bars) {
    document.getElementById(id).innerHTML = bars[id].split(' ').map(toolHtml).join('');
}
```
